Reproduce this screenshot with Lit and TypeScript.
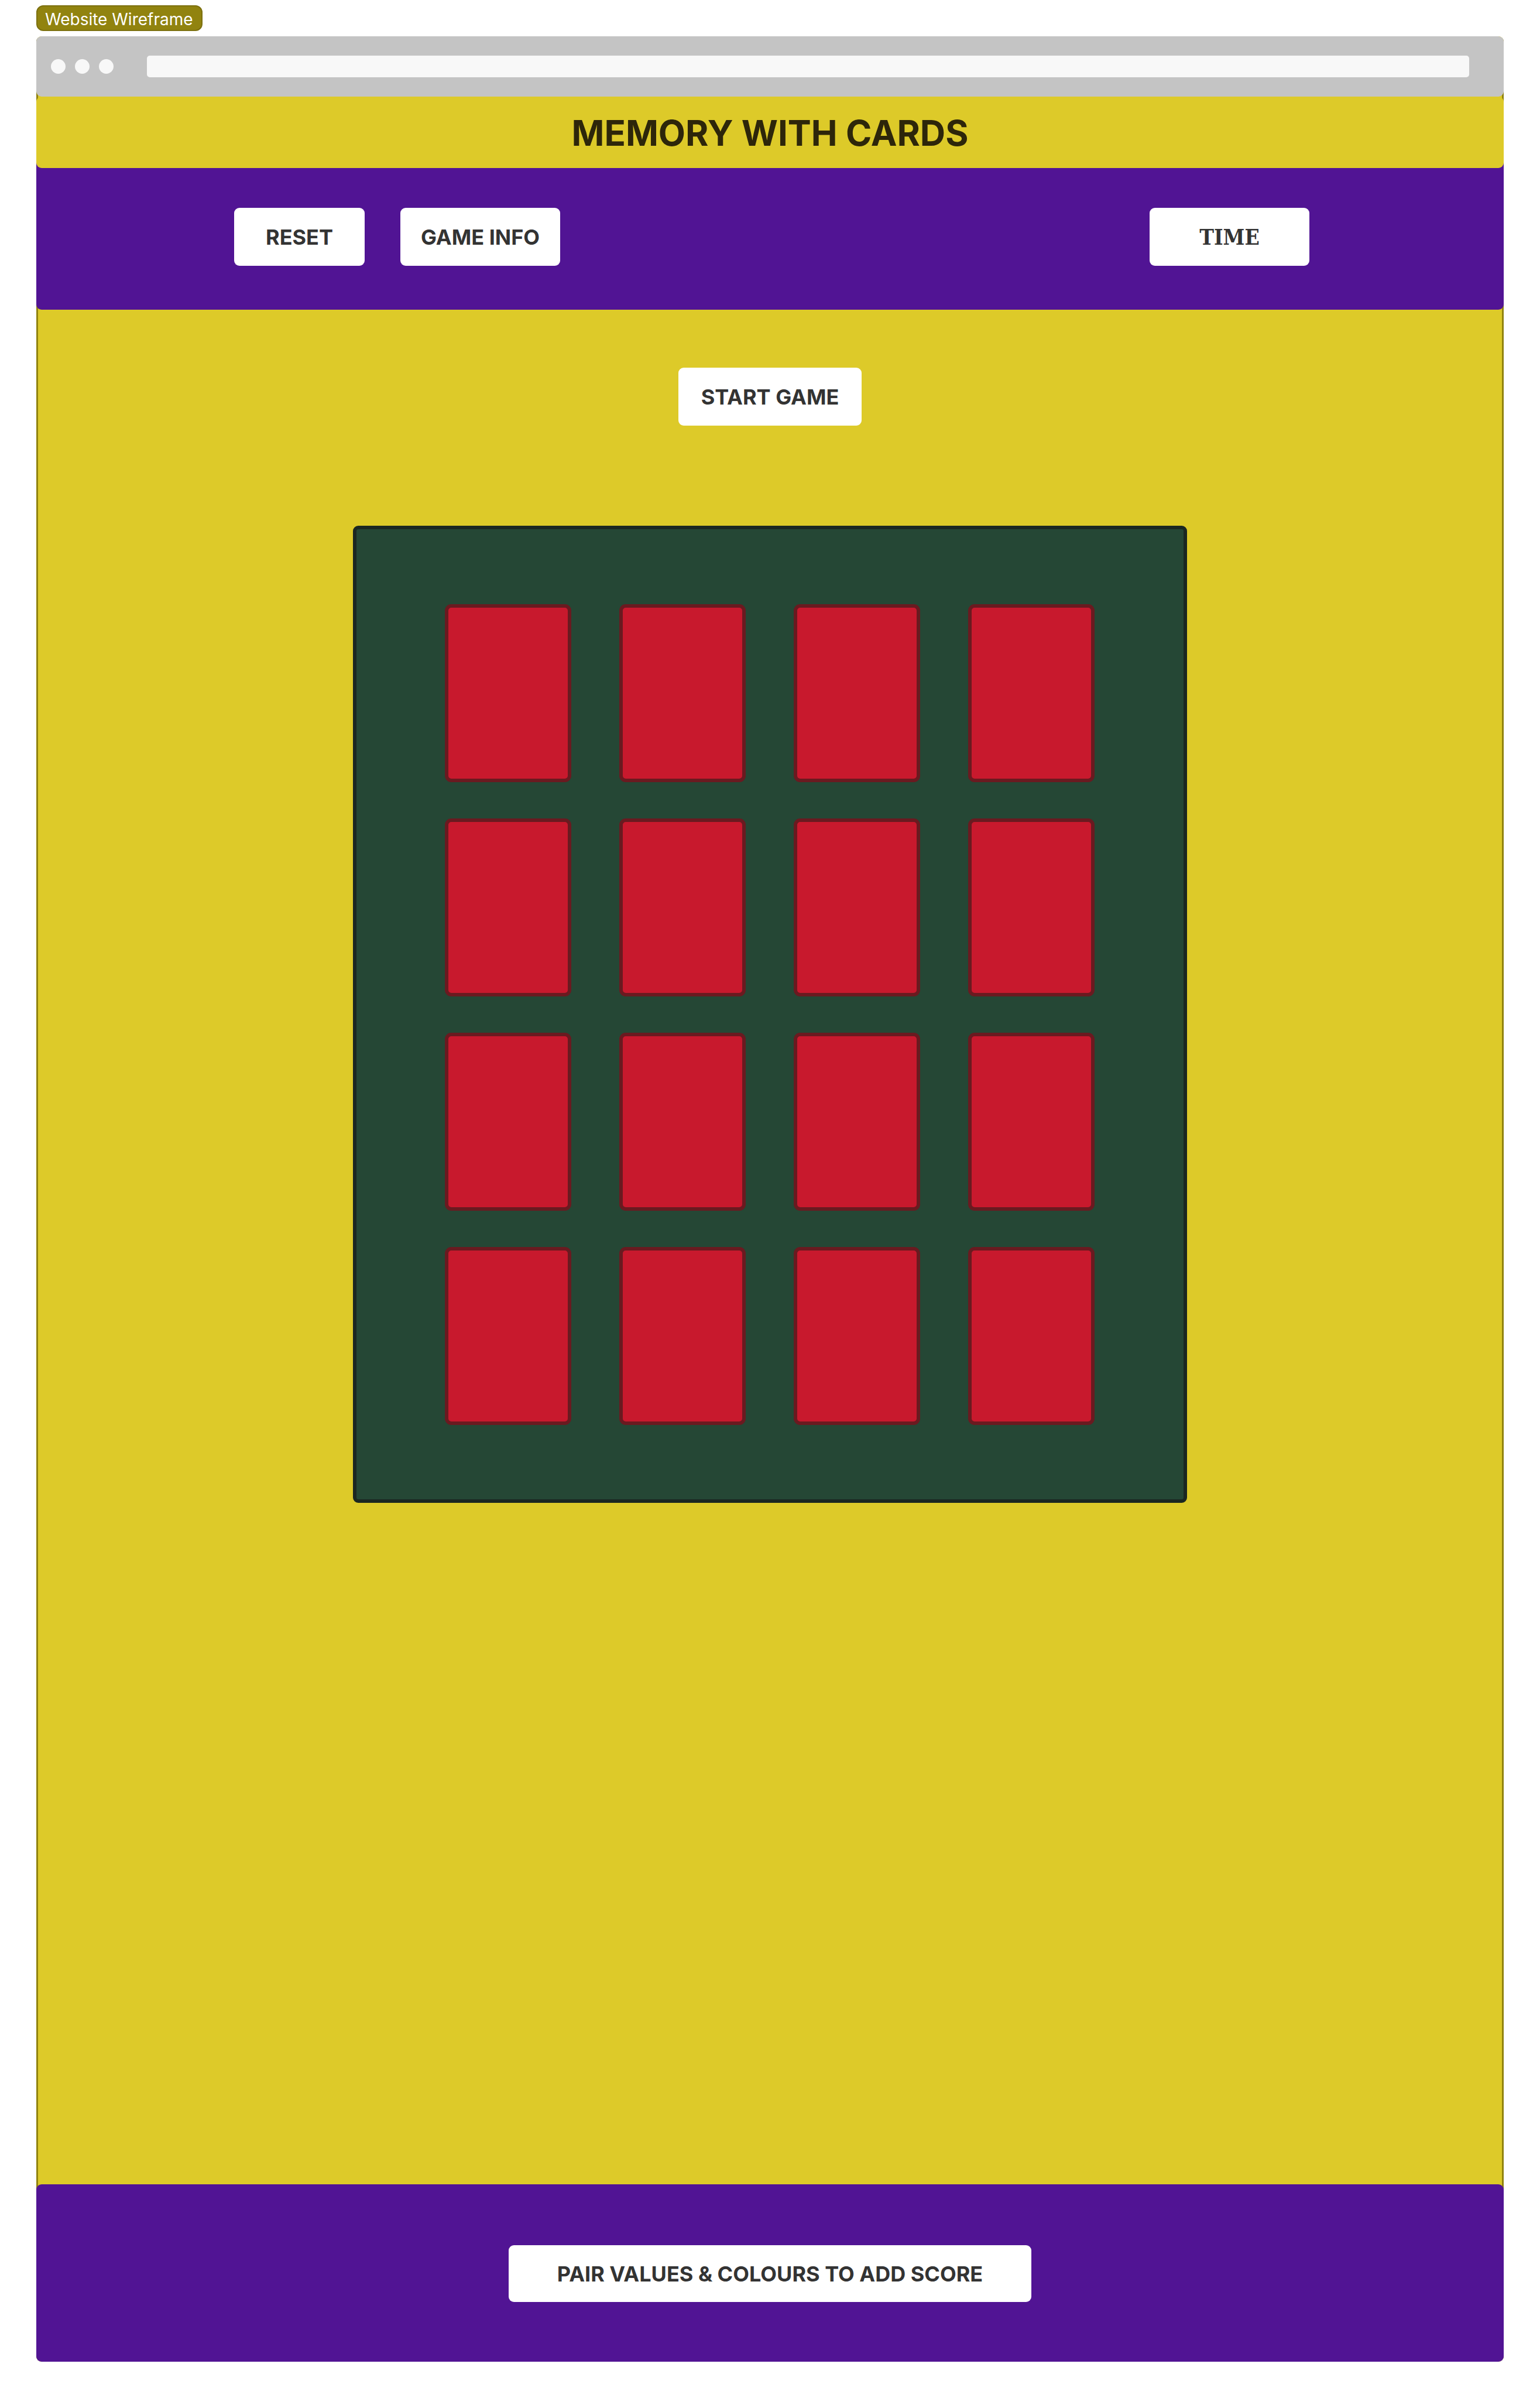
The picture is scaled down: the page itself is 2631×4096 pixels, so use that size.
import { LitElement, html, css } from "lit";
import { customElement, property } from "lit/decorators.js";

@customElement("browser-bar")
export class BrowserBar extends LitElement {
  static styles = css`
    :host {
      display: flex;
      align-items: center;
      box-sizing: border-box;
      height: 103px;
      padding: 0 59px 0 25px;
      border-radius: 9px;
      background: #c4c4c4;
    }
    .dots {
      display: flex;
      gap: 16px;
      margin-right: 57px;
    }
    .dot {
      width: 25px;
      height: 25px;
      border-radius: 50%;
      background: #f8f8f8;
    }
    .address {
      flex: 1;
      min-width: 0;
      height: 37px;
      margin: 0;
      padding: 0 12px;
      box-sizing: border-box;
      border: 0;
      border-radius: 5px;
      background: #f8f8f8;
      font: 24px Inter, sans-serif;
    }
  `;

  render() {
    return html`
      <div class="dots">
        <span class="dot"></span>
        <span class="dot"></span>
        <span class="dot"></span>
      </div>
      <input class="address" type="text" aria-label="Address" />
    `;
  }
}

@customElement("card-board")
export class CardBoard extends LitElement {
  @property({ type: Number }) count = 16;

  static styles = css`
    :host {
      display: block;
    }
    .board {
      display: grid;
      grid-template-columns: repeat(4, 216px);
      grid-auto-rows: 304px;
      gap: 62px 82px;
      padding: 128px 152px 127px 151px;
      border: 6px solid #1b2721;
      border-radius: 9px;
      background: #254735;
    }
    .card {
      margin: 0;
      padding: 0;
      border: 6px solid #6a1a20;
      border-radius: 11px;
      background: #c8192d;
      cursor: pointer;
    }
  `;

  render() {
    return html`
      <div class="board">
        ${Array.from(
          { length: this.count },
          (_, i) => html`<button class="card" type="button" aria-label="Card ${i + 1}"></button>`
        )}
      </div>
    `;
  }
}

@customElement("app-root")
export class AppRoot extends LitElement {
  static styles = css`
    :host {
      display: flex;
      flex-direction: column;
      align-items: stretch;
      box-sizing: border-box;
      min-height: 100vh;
      padding: 9px 62px 62px;
      background: #ffffff;
      color: #333333;
      font-family: Inter, "Liberation Sans", sans-serif;
    }
    .tag {
      align-self: flex-start;
      box-sizing: border-box;
      height: 44px;
      margin-bottom: 9px;
      padding: 4px 14px 0 13px;
      border: 2px solid #7c700f;
      border-radius: 12px;
      background: #91830f;
      color: #ffffff;
      font-size: 28px;
      line-height: 36px;
    }
    .frame {
      display: flex;
      flex: 1;
      flex-direction: column;
      border-radius: 9px;
      background: linear-gradient(#ddca29, #ddca29) center / calc(100% - 6px) 100% no-repeat #91830f;
    }
    .title {
      display: flex;
      align-items: center;
      justify-content: center;
      position: relative;
      z-index: 1;
      box-sizing: border-box;
      height: 122px;
      margin: 0;
      padding-top: 2px;
      border-radius: 9px;
      background: #ddca29;
      color: #2d260a;
      font-size: 60px;
      font-weight: 700;
      line-height: 76px;
    }
    .toolbar {
      display: flex;
      align-items: center;
      gap: 61px;
      margin-top: -12px;
      padding: 80px 332px 75px 338px;
      border-radius: 0 0 9px 9px;
      background: #511494;
    }
    .panel {
      display: flex;
      align-items: center;
      justify-content: center;
      box-sizing: border-box;
      min-width: 223px;
      height: 99px;
      margin: 0;
      padding: 0 24px;
      border: 0;
      border-radius: 9px;
      background: #ffffff;
      color: #333333;
      font-family: inherit;
      font-size: 36px;
      font-weight: 700;
      line-height: 48px;
      white-space: nowrap;
    }
    .medium {
      min-width: 273px;
    }
    .large {
      min-width: 313px;
    }
    .time {
      margin-left: auto;
      font-family: "DejaVu Serif Condensed", "DejaVu Serif", serif;
      font-size: 37px;
    }
    .game {
      display: flex;
      flex: 1;
      flex-direction: column;
      align-items: center;
      gap: 171px;
      padding: 99px 0;
    }
    .footer {
      display: flex;
      align-items: center;
      justify-content: center;
      padding: 104px 24px 102px;
      border-radius: 9px;
      background: #511494;
    }
    .hint {
      min-width: 893px;
      height: 97px;
    }
  `;

  render() {
    return html`
      <div class="tag">Website Wireframe</div>
      <div class="frame">
        <browser-bar></browser-bar>
        <h1 class="title">MEMORY WITH CARDS</h1>
        <nav class="toolbar">
          <button class="panel" type="button">RESET</button>
          <button class="panel medium" type="button">GAME INFO</button>
          <div class="panel medium time">TIME</div>
        </nav>
        <main class="game">
          <button class="panel large" type="button">START GAME</button>
          <card-board></card-board>
        </main>
        <footer class="footer">
          <div class="panel hint">PAIR VALUES &amp; COLOURS TO ADD SCORE</div>
        </footer>
      </div>
    `;
  }
}
